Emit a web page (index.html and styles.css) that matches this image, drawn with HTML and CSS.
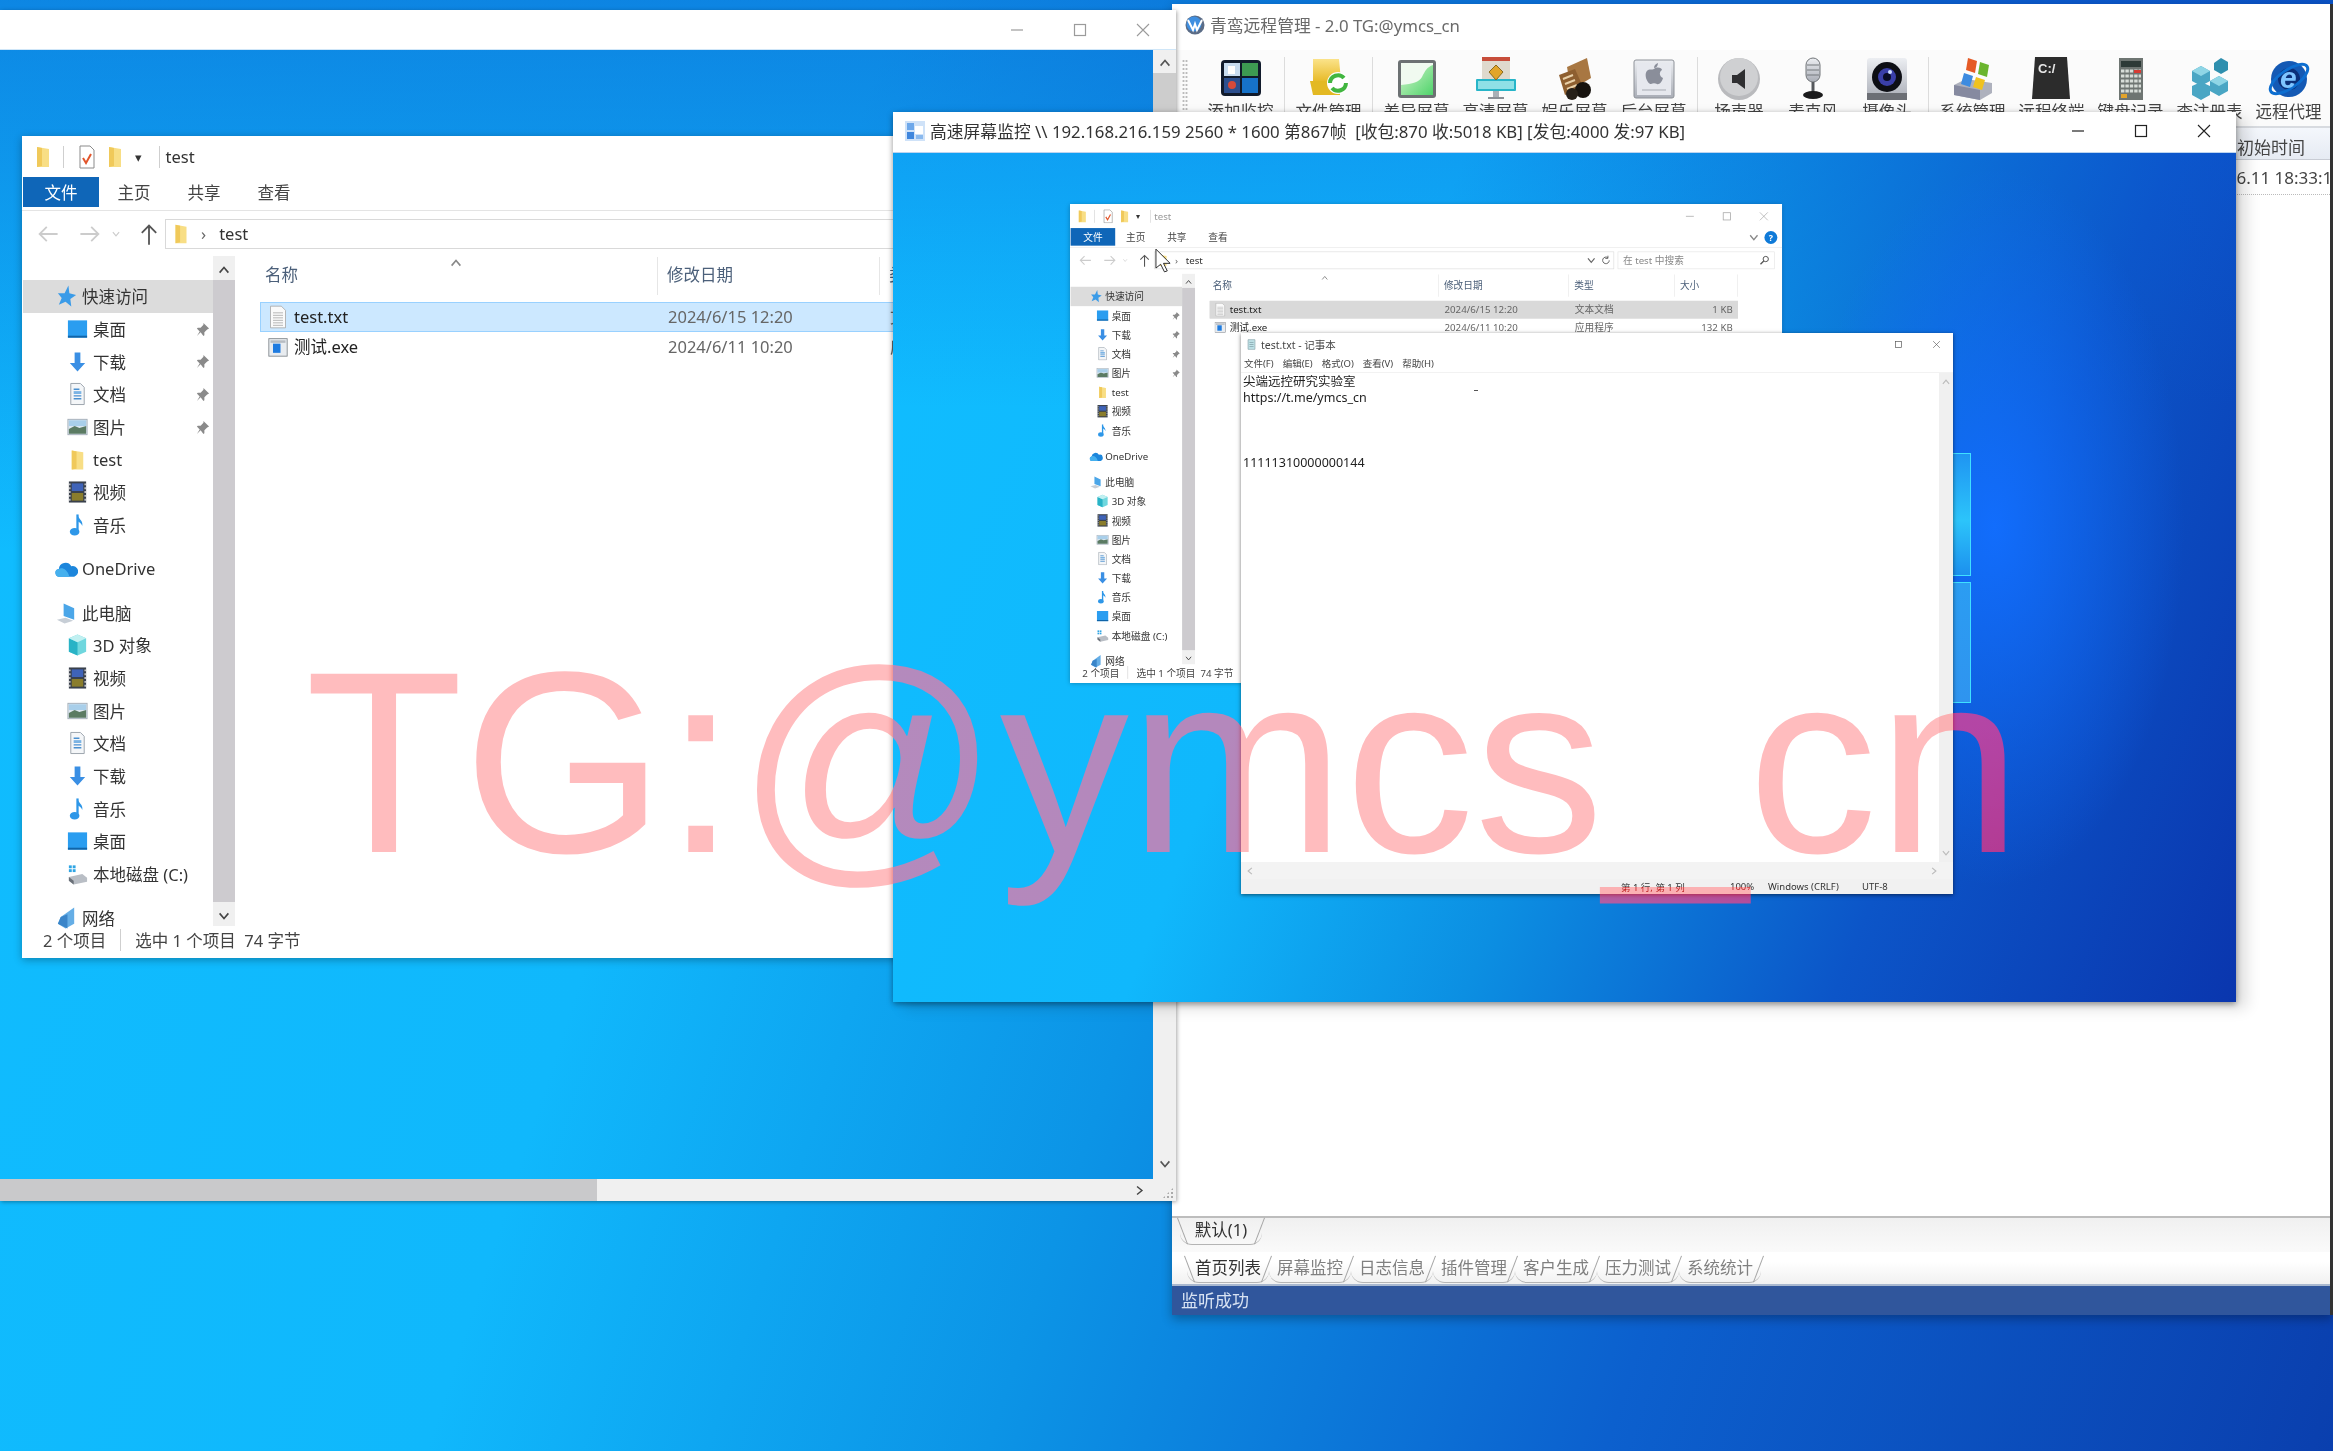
FILE: index.html
```html
<!DOCTYPE html>
<html lang="zh-CN">
<head>
  <meta charset="UTF-8">
  <title>青鸾远程管理 - 高速屏幕监控</title>
  <link rel="stylesheet" href="styles.css">
</head>
<body>
  <svg class="sprite" aria-hidden="true">
    <defs>
      <linearGradient id="g-silver" x1="0" y1="0" x2="0" y2="1"><stop offset="0" stop-color="#eceef2"/><stop offset="1" stop-color="#a9adb6"/></linearGradient>
      <linearGradient id="g-green" x1="0" y1="0" x2="1" y2="1"><stop offset="0" stop-color="#d8f5cf"/><stop offset="1" stop-color="#4fd46b"/></linearGradient>
      <linearGradient id="g-yellow" x1="0" y1="0" x2="0" y2="1"><stop offset="0" stop-color="#fbe38a"/><stop offset="1" stop-color="#e8bb2a"/></linearGradient>
    </defs>
    <symbol id="i-min" viewBox="0 0 16 16"><path d="M2 8h12" stroke="currentColor" stroke-width="1.2"/></symbol>
    <symbol id="i-max" viewBox="0 0 16 16"><rect x="2.5" y="2.5" width="11" height="11" fill="none" stroke="currentColor" stroke-width="1.2"/></symbol>
    <symbol id="i-close" viewBox="0 0 16 16"><path d="M2 2l12 12M14 2L2 14" stroke="currentColor" stroke-width="1.1"/></symbol>
    <symbol id="i-folder" viewBox="0 0 24 24"><path d="M6 2l12 2v18H6z" fill="#f8de85"/><path d="M6 2l5 1v18l-5 1z" fill="#f0c95a"/></symbol>
    <symbol id="i-check" viewBox="0 0 24 24"><path d="M5 1h10l4 4v18H5z" fill="#fff" stroke="#8b8b8b"/><path d="M8 13l3 5 5-9" fill="none" stroke="#e2552b" stroke-width="2"/></symbol>
    <symbol id="i-star" viewBox="0 0 24 24"><path d="M14 1l1 8 7 2-6 4 1 8-6-5-7 3 3-7-4-5h7z" fill="#3a9be8"/></symbol>
    <symbol id="i-desktop" viewBox="0 0 24 24"><rect x="2" y="3" width="20" height="18" fill="#2a9df0"/><rect x="2" y="19" width="20" height="2" fill="#1164a8"/></symbol>
    <symbol id="i-down" viewBox="0 0 24 24"><path d="M9 2h6v11h5l-8 9-8-9h5z" fill="#3a8fe4"/></symbol>
    <symbol id="i-doc" viewBox="0 0 24 24"><path d="M5 1h10l4 4v18H5z" fill="#f4f6f8" stroke="#9aa2ab"/><path d="M8 7h6M8 14h8M8 17h8" stroke="#4a90d0" stroke-width="1.4"/><rect x="8" y="9" width="8" height="3" fill="#7cb4e4"/></symbol>
    <symbol id="i-picture" viewBox="0 0 24 24"><rect x="2" y="4" width="20" height="16" fill="#dfe9f2" stroke="#a5afb9"/><path d="M3 14l6-3 5 2 7-2v8H3z" fill="#5b7b63"/><rect x="3" y="5" width="18" height="6" fill="#a9cfea"/></symbol>
    <symbol id="i-video" viewBox="0 0 24 24"><rect x="3" y="1" width="18" height="22" fill="#39404c"/><rect x="6" y="3" width="12" height="8" fill="#3f63b8"/><rect x="6" y="13" width="12" height="8" fill="#8a7d2c"/><path d="M4 3v18M20 3v18" stroke="#d8d8d8" stroke-width="1.4" stroke-dasharray="2 2"/></symbol>
    <symbol id="i-music" viewBox="0 0 24 24"><path d="M12 1v16" stroke="#2e97e8" stroke-width="2.4"/><ellipse cx="9" cy="19" rx="5" ry="4" fill="#2e97e8"/><path d="M12 1c1 5 6 6 5 12-1-3-3-4-5-5z" fill="#2e97e8"/></symbol>
    <symbol id="i-cloud" viewBox="0 0 24 24"><path d="M5 20a4 4 0 0 1-1-8 7 7 0 0 1 13-3 5 5 0 0 1 3 11z" fill="#1c86dc"/><path d="M5 20a4 4 0 0 1-1-8c3-2 9 0 11 8z" fill="#45b0ee"/></symbol>
    <symbol id="i-pc" viewBox="0 0 24 24"><path d="M9 2l11 5v12L9 15z" fill="#4ba6e8"/><path d="M2 19l9-2 8 3-9 3z" fill="#c7ced6"/></symbol>
    <symbol id="i-cube" viewBox="0 0 24 24"><path d="M12 1l9 4v14l-9 4-9-4V5z" fill="#6fd7de"/><path d="M12 9v14l-9-4V5z" fill="#29b3c6"/><path d="M12 1l9 4-9 4-9-4z" fill="#c1f0f1"/></symbol>
    <symbol id="i-disk" viewBox="0 0 24 24"><path d="M3 15l14-3 5 4v4l-14 3-5-4z" fill="#b9bec5"/><path d="M3 15v4l5 4v-4z" fill="#6a7078"/><rect x="3" y="3" width="3" height="3" fill="#2fa5e4"/><rect x="7" y="3" width="3" height="3" fill="#2fa5e4"/><rect x="3" y="7" width="3" height="3" fill="#2fa5e4"/><rect x="7" y="7" width="3" height="3" fill="#2fa5e4"/></symbol>
    <symbol id="i-net" viewBox="0 0 24 24"><path d="M20 1v17l-9 5-8-5 3-7z" fill="#65aee6"/><path d="M13 8v15l-10-5 3-7z" fill="#3a85c9"/></symbol>
    <symbol id="i-pin" viewBox="0 0 16 16"><path d="M9 1l6 6-2 1-3 3v3l-1 1-3-4-4 4 3-5-3-3 1-1h3l3-3z" fill="#8a8a8a"/></symbol>
    <symbol id="i-txt" viewBox="0 0 24 28"><path d="M3 1h13l5 5v21H3z" fill="#fafafa" stroke="#a8a8a8"/><path d="M6 9h12M6 12h12M6 15h12M6 18h12M6 21h12M6 24h12" stroke="#a9a9a9"/></symbol>
    <symbol id="i-exe" viewBox="0 0 24 24"><rect x="1" y="2" width="22" height="21" fill="#e8ecf0" stroke="#7c8288"/><rect x="3" y="4" width="18" height="3" fill="#b7bcc2"/><rect x="6" y="8" width="9" height="11" fill="#1e7be0"/></symbol>
    <symbol id="i-chev-up" viewBox="0 0 16 16"><path d="M3 11l5-6 5 6" fill="none" stroke="currentColor" stroke-width="1.8"/></symbol>
    <symbol id="i-chev-down" viewBox="0 0 16 16"><path d="M3 5l5 6 5-6" fill="none" stroke="currentColor" stroke-width="1.8"/></symbol>
    <symbol id="i-chev-left" viewBox="0 0 16 16"><path d="M11 3l-6 5 6 5" fill="none" stroke="currentColor" stroke-width="1.8"/></symbol>
    <symbol id="i-chev-right" viewBox="0 0 16 16"><path d="M5 3l6 5-6 5" fill="none" stroke="currentColor" stroke-width="1.8"/></symbol>
    <symbol id="i-left" viewBox="0 0 20 20"><path d="M18 10H3M9 4l-6 6 6 6" fill="none" stroke="currentColor" stroke-width="1.5"/></symbol>
    <symbol id="i-right" viewBox="0 0 20 20"><path d="M2 10h15M11 4l6 6-6 6" fill="none" stroke="currentColor" stroke-width="1.5"/></symbol>
    <symbol id="i-up" viewBox="0 0 20 20"><path d="M10 19V3M4 9l6-6 6 6" fill="none" stroke="currentColor" stroke-width="1.5"/></symbol>
    <symbol id="i-refresh" viewBox="0 0 16 16"><path d="M13 8a5 5 0 1 1-2-4" fill="none" stroke="currentColor" stroke-width="1.5"/><path d="M11 1v4H7" fill="none" stroke="currentColor" stroke-width="1.5"/></symbol>
    <symbol id="i-search" viewBox="0 0 16 16"><circle cx="10" cy="6" r="4" fill="none" stroke="currentColor" stroke-width="1.5"/><path d="M7 9l-5 5" stroke="currentColor" stroke-width="2"/></symbol>
    <symbol id="i-monitor" viewBox="0 0 20 20"><rect width="20" height="20" fill="#cfe2f8"/><rect x="2" y="2" width="7" height="7" fill="#6ea8ea"/><rect x="10" y="5" width="8" height="8" fill="#fff"/><rect x="2" y="11" width="7" height="7" fill="#3f86dd"/><rect x="11" y="14" width="7" height="4" fill="#8ab9ee"/></symbol>
    <symbol id="i-notepad" viewBox="0 0 16 16"><path d="M3 1h10v14H3z" fill="#bfe3e8" stroke="#8aa6ad"/><path d="M5 5h6M5 8h6M5 11h6" stroke="#7e9aa2"/></symbol>
  </svg>

  <main class="desktop">

    <!-- main console, right side -->
    <section class="console">
      <header class="console-title">
        <svg class="console-logo" viewBox="0 0 20 20">
          <circle cx="10" cy="10" r="9.5" fill="#5b6c86"/>
          <circle cx="9" cy="9" r="7.5" fill="#3f8fe0"/>
          <path d="M3 5l5 10 2-6 2 6 5-10" fill="none" stroke="#fff" stroke-width="2"/>
        </svg>
        <span>青鸾远程管理 - 2.0 TG:@ymcs_cn</span>
      </header>
      <div class="toolbar">
        <span class="grip"></span>
        <div class="tool">
          <svg viewBox="0 0 44 44"><rect x="2" y="3" width="40" height="36" rx="4" fill="#111b2c"/><rect x="5" y="6" width="16" height="13" fill="#c8dcf0"/><rect x="23" y="6" width="16" height="13" fill="#3d9a52"/><rect x="5" y="21" width="16" height="15" fill="#2c4f8e"/><rect x="23" y="21" width="16" height="15" fill="#1672c9"/><circle cx="13" cy="28" r="4" fill="#d64a3a"/><rect x="9" y="9" width="7" height="8" fill="#fff"/></svg>
          <span>添加监控</span>
        </div>
        <span class="tool-sep"></span>
        <div class="tool">
          <svg viewBox="0 0 44 44"><path d="M6 2h26l2 22H6z" fill="url(#g-yellow)"/><path d="M3 24h30v14H6z" fill="#e3b923"/><circle cx="31" cy="26" r="11" fill="#fff"/><path d="M23 26a8 8 0 0 1 14-5M39 26a8 8 0 0 1-14 5" fill="none" stroke="#42b640" stroke-width="4"/></svg>
          <span>文件管理</span>
        </div>
        <span class="tool-sep"></span>
        <div class="tool">
          <svg viewBox="0 0 44 44"><rect x="3" y="3" width="38" height="38" rx="3" fill="#6c7173"/><rect x="6" y="6" width="32" height="32" fill="url(#g-green)"/><path d="M6 6h32v2c-6 2-8 6-11 12-3 5-9 7-21 8z" fill="#f0faf0"/></svg>
          <span>差异屏幕</span>
        </div>
        <div class="tool">
          <svg viewBox="0 0 44 44"><rect x="8" y="0" width="28" height="6" fill="#c74d3a"/><rect x="8" y="4" width="28" height="26" fill="#dfd9cd"/><rect x="2" y="22" width="40" height="12" rx="1" fill="#27b5c8"/><rect x="4" y="24" width="36" height="8" fill="#8fe0e6"/><path d="M22 8l7 7-7 8-7-8z" fill="#e2a52a" stroke="#8a6a1e"/><rect x="19" y="34" width="6" height="6" fill="#aab0b6"/><rect x="14" y="40" width="16" height="2" fill="#8b9096"/></svg>
          <span>高清屏幕</span>
        </div>
        <div class="tool">
          <svg viewBox="0 0 44 44"><path d="M14 10l20-9 4 20-20 12z" fill="#a87742"/><path d="M6 18l16-6 8 18-18 8z" fill="#8e5f30"/><path d="M10 22l10-4M12 27l10-4M14 32l10-4" stroke="#e8d0a8" stroke-width="2"/><circle cx="30" cy="33" r="8" fill="#17130f"/><circle cx="19" cy="37" r="6" fill="#262019"/></svg>
          <span>娱乐屏幕</span>
        </div>
        <div class="tool">
          <svg viewBox="0 0 44 44"><rect x="2" y="3" width="40" height="38" rx="2" fill="url(#g-silver)" stroke="#8e9299"/><rect x="5" y="6" width="34" height="32" fill="#e6e8ee"/><path d="M22 12c3-3 8-1 8 1-3 2-3 6 1 8-1 4-4 7-6 6-2-1-4-1-6 0-4 0-8-11-3-14 2-1 4 0 6-1z" fill="#8a8e9a"/><path d="M22 11c0-3 2-4 4-5 0 3-2 5-4 5z" fill="#8a8e9a"/><path d="M10 33h24" stroke="#a7abb3"/></svg>
          <span>后台屏幕</span>
        </div>
        <span class="tool-sep"></span>
        <div class="tool tool-short">
          <svg viewBox="0 0 44 44"><circle cx="22" cy="22" r="21" fill="#b9babd"/><circle cx="22" cy="20" r="19" fill="#cfd0d2"/><path d="M15 18h5l8-6v20l-8-6h-5z" fill="#2f2f31"/></svg>
          <span>扬声器</span>
        </div>
        <div class="tool tool-short">
          <svg viewBox="0 0 44 44"><rect x="15" y="1" width="14" height="24" rx="7" fill="url(#g-silver)" stroke="#707478"/><path d="M16 8h12M16 13h12M16 18h12" stroke="#74787c"/><path d="M22 25v11" stroke="#55585c" stroke-width="3"/><ellipse cx="22" cy="38" rx="10" ry="4" fill="#1b1b1c"/></svg>
          <span>麦克风</span>
        </div>
        <div class="tool tool-short">
          <svg viewBox="0 0 44 44"><rect x="2" y="1" width="40" height="42" rx="3" fill="url(#g-silver)"/><rect x="2" y="36" width="40" height="7" fill="#6c6f75"/><circle cx="22" cy="20" r="15" fill="#0d0e14"/><circle cx="22" cy="20" r="9" fill="#3a3fa8"/><circle cx="22" cy="20" r="4" fill="#0b0d26"/><circle cx="25" cy="15" r="2" fill="#cfe0ff"/></svg>
          <span>摄像头</span>
        </div>
        <span class="tool-sep"></span>
        <div class="tool">
          <svg viewBox="0 0 44 44"><path d="M3 28l12-6 26 4v10l-12 7-26-5z" fill="#aeb1bd"/><path d="M3 28l26 5v10L3 38z" fill="#868aa0"/><path d="M17 1l9 3-2 12-9-3z" fill="#e55a26"/><path d="M29 5l9 3-2 12-9-3z" fill="#6bb52e"/><path d="M13 16l9 3-3 11-9-3z" fill="#3d8be0"/><path d="M25 20l9 3-3 10-9-3z" fill="#f0c21f"/></svg>
          <span>系统管理</span>
        </div>
        <div class="tool">
          <svg viewBox="0 0 44 44"><path d="M5 0h32l3 42H2z" fill="#2c2c2c"/><text x="8" y="16" class="key-text">C:/</text></svg>
          <span>远程终端</span>
        </div>
        <div class="tool">
          <svg viewBox="0 0 44 44"><rect x="10" y="1" width="24" height="42" fill="#6e7572"/><rect x="12" y="4" width="20" height="6" fill="#2d3a37"/><path d="M12 14h20M12 19h20M12 24h20M12 29h20M12 34h20" stroke="#d7ddd8" stroke-width="3" stroke-dasharray="3.4 1"/><rect x="25" y="13" width="7" height="3" fill="#d63b34"/><rect x="12" y="37" width="6" height="4" fill="#e2a32a"/></svg>
          <span>键盘记录</span>
        </div>
        <div class="tool">
          <svg viewBox="0 0 44 44"><path d="M4 14l9-5 9 5v10l-9 5-9-5zM4 29l9-4 9 4v9l-9 5-9-5zM22 24l9-5 9 5v10l-9 5-9-5z" fill="#4aa6c4"/><path d="M4 14l9-5 9 5-9 5zM22 24l9-5 9 5-9 5z" fill="#8fd6e6"/><path d="M26 6l7-5 7 4v8l-7 4-7-4z" fill="#2f8fae"/></svg>
          <span>查注册表</span>
        </div>
        <div class="tool">
          <svg viewBox="0 0 44 44"><circle cx="22" cy="22" r="18" fill="#1459b4"/><circle cx="22" cy="22" r="11" fill="#0b2f78"/><ellipse cx="22" cy="22" rx="22" ry="9" fill="none" stroke="#0d6ed0" stroke-width="3" transform="rotate(-35 22 22)"/><text x="13" y="31" class="ie-text">e</text></svg>
          <span>远程代理</span>
        </div>
      </div>
      <div class="list-head"><span>初始时间</span></div>
      <div class="list-rows">
        <div class="list-row"><span>2024.6.11 18:33:12</span></div>
      </div>
      <div class="group-tabs">
        <div class="tab tab-on">默认(1)</div>
      </div>
      <nav class="page-tabs">
        <div class="tab tab-on">首页列表</div>
        <div class="tab">屏幕监控</div>
        <div class="tab">日志信息</div>
        <div class="tab">插件管理</div>
        <div class="tab">客户生成</div>
        <div class="tab">压力测试</div>
        <div class="tab">系统统计</div>
      </nav>
      <footer class="console-status">监听成功</footer>
    </section>

    <!-- empty child window behind the explorer -->
    <section class="back-win">
      <header class="win-title back-title">
        <span class="win-btns back-btns">
          <svg><use href="#i-min"/></svg><svg><use href="#i-max"/></svg><svg><use href="#i-close"/></svg>
        </span>
      </header>
      <div class="back-body">
        <div class="back-client"></div>
        <div class="vscroll">
          <svg><use href="#i-chev-up"/></svg>
          <span class="vscroll-thumb"></span>
          <svg><use href="#i-chev-down"/></svg>
        </div>
      </div>
      <div class="hscroll">
        <span class="hscroll-thumb"></span>
        <svg><use href="#i-chev-right"/></svg>
        <i class="size-grip"></i>
      </div>
    </section>

    <!-- local explorer -->
    <section class="explorer explorer-local">
      <header class="ex-title">
        <svg class="ex-qa"><use href="#i-folder"/></svg>
        <i class="ex-bar"></i>
        <svg class="ex-qa"><use href="#i-check"/></svg>
        <svg class="ex-qa"><use href="#i-folder"/></svg>
        <span class="ex-caret">▾</span>
        <i class="ex-bar"></i>
        <span class="ex-name">test</span>
        <span class="win-btns ex-btns">
          <svg><use href="#i-min"/></svg><svg><use href="#i-max"/></svg><svg><use href="#i-close"/></svg>
        </span>
      </header>
      <div class="ribbon">
        <span class="rb-file">文件</span><span>主页</span><span>共享</span><span>查看</span>
        <svg class="rb-fold"><use href="#i-chev-down"/></svg>
        <b class="rb-help">?</b>
      </div>
      <div class="addr-row">
        <svg class="nav-arrow off"><use href="#i-left"/></svg>
        <svg class="nav-arrow off"><use href="#i-right"/></svg>
        <svg class="nav-drop"><use href="#i-chev-down"/></svg>
        <svg class="nav-arrow nav-parent"><use href="#i-up"/></svg>
        <div class="addr-box">
          <svg><use href="#i-folder"/></svg><span class="addr-sep">›</span><span>test</span>
          <svg class="addr-tool addr-drop"><use href="#i-chev-down"/></svg>
          <svg class="addr-tool"><use href="#i-refresh"/></svg>
        </div>
        <div class="search-box"><span>在 test 中搜索</span><svg><use href="#i-search"/></svg></div>
      </div>
      <div class="ex-body">
        <ul class="nav-pane">
          <li class="nav-item nav-top nav-on"><svg><use href="#i-star"/></svg>快速访问</li>
          <li class="nav-item"><svg><use href="#i-desktop"/></svg>桌面<svg class="pin"><use href="#i-pin"/></svg></li>
          <li class="nav-item"><svg><use href="#i-down"/></svg>下载<svg class="pin"><use href="#i-pin"/></svg></li>
          <li class="nav-item"><svg><use href="#i-doc"/></svg>文档<svg class="pin"><use href="#i-pin"/></svg></li>
          <li class="nav-item"><svg><use href="#i-picture"/></svg>图片<svg class="pin"><use href="#i-pin"/></svg></li>
          <li class="nav-item"><svg><use href="#i-folder"/></svg>test</li>
          <li class="nav-item"><svg><use href="#i-video"/></svg>视频</li>
          <li class="nav-item"><svg><use href="#i-music"/></svg>音乐</li>
          <li class="nav-item nav-top nav-gap"><svg><use href="#i-cloud"/></svg>OneDrive</li>
          <li class="nav-item nav-top nav-gap"><svg><use href="#i-pc"/></svg>此电脑</li>
          <li class="nav-item"><svg><use href="#i-cube"/></svg>3D 对象</li>
          <li class="nav-item"><svg><use href="#i-video"/></svg>视频</li>
          <li class="nav-item"><svg><use href="#i-picture"/></svg>图片</li>
          <li class="nav-item"><svg><use href="#i-doc"/></svg>文档</li>
          <li class="nav-item"><svg><use href="#i-down"/></svg>下载</li>
          <li class="nav-item"><svg><use href="#i-music"/></svg>音乐</li>
          <li class="nav-item"><svg><use href="#i-desktop"/></svg>桌面</li>
          <li class="nav-item"><svg><use href="#i-disk"/></svg>本地磁盘 (C:)</li>
          <li class="nav-item nav-top nav-gap"><svg><use href="#i-net"/></svg>网络</li>
        </ul>
        <div class="nav-scroll">
          <svg><use href="#i-chev-up"/></svg>
          <span class="nav-thumb"></span>
          <svg><use href="#i-chev-down"/></svg>
        </div>
        <div class="files">
          <div class="file-head">
            <span>名称<svg class="sort-mark"><use href="#i-chev-up"/></svg></span><span>修改日期</span><span>类型</span><span>大小</span>
          </div>
          <div class="file-row file-sel">
            <span class="file-name"><svg class="file-icon"><use href="#i-txt"/></svg>test.txt</span><span>2024/6/15 12:20</span><span>文本文档</span><span class="file-size">1 KB</span>
          </div>
          <div class="file-row">
            <span class="file-name"><svg class="file-icon"><use href="#i-exe"/></svg>测试.exe</span><span>2024/6/11 10:20</span><span>应用程序</span><span class="file-size">132 KB</span>
          </div>
        </div>
      </div>
      <footer class="ex-status"><span>2 个项目</span><i class="ex-bar"></i><span>选中 1 个项目&nbsp; 74 字节</span></footer>
    </section>

    <!-- screen monitor window -->
    <section class="monitor">
      <header class="win-title monitor-title">
        <svg class="monitor-icon"><use href="#i-monitor"/></svg>
        <span>高速屏幕监控 \\ 192.168.216.159 2560 * 1600 第867帧 &nbsp;[收包:870 收:5018 KB] [发包:4000 发:97 KB]</span>
        <span class="win-btns monitor-btns">
          <svg><use href="#i-min"/></svg><svg><use href="#i-max"/></svg><svg><use href="#i-close"/></svg>
        </span>
      </header>
      <div class="remote">
        <span class="logo-pane logo-top"></span>
        <span class="logo-pane logo-bottom"></span>

        <section class="explorer explorer-remote">
          <header class="ex-title">
            <svg class="ex-qa"><use href="#i-folder"/></svg>
            <i class="ex-bar"></i>
            <svg class="ex-qa"><use href="#i-check"/></svg>
            <svg class="ex-qa"><use href="#i-folder"/></svg>
            <span class="ex-caret">▾</span>
            <i class="ex-bar"></i>
            <span class="ex-name">test</span>
            <span class="win-btns ex-btns">
              <svg><use href="#i-min"/></svg><svg><use href="#i-max"/></svg><svg><use href="#i-close"/></svg>
            </span>
          </header>
          <div class="ribbon">
            <span class="rb-file">文件</span><span>主页</span><span>共享</span><span>查看</span>
            <svg class="rb-fold"><use href="#i-chev-down"/></svg>
            <b class="rb-help">?</b>
          </div>
          <div class="addr-row">
            <svg class="nav-arrow off"><use href="#i-left"/></svg>
            <svg class="nav-arrow off"><use href="#i-right"/></svg>
            <svg class="nav-drop"><use href="#i-chev-down"/></svg>
            <svg class="nav-arrow nav-parent"><use href="#i-up"/></svg>
            <div class="addr-box">
              <svg><use href="#i-folder"/></svg><span class="addr-sep">›</span><span>test</span>
              <svg class="addr-tool addr-drop"><use href="#i-chev-down"/></svg>
              <svg class="addr-tool"><use href="#i-refresh"/></svg>
            </div>
            <div class="search-box"><span>在 test 中搜索</span><svg><use href="#i-search"/></svg></div>
          </div>
          <div class="ex-body">
            <ul class="nav-pane">
              <li class="nav-item nav-top nav-on"><svg><use href="#i-star"/></svg>快速访问</li>
              <li class="nav-item"><svg><use href="#i-desktop"/></svg>桌面<svg class="pin"><use href="#i-pin"/></svg></li>
              <li class="nav-item"><svg><use href="#i-down"/></svg>下载<svg class="pin"><use href="#i-pin"/></svg></li>
              <li class="nav-item"><svg><use href="#i-doc"/></svg>文档<svg class="pin"><use href="#i-pin"/></svg></li>
              <li class="nav-item"><svg><use href="#i-picture"/></svg>图片<svg class="pin"><use href="#i-pin"/></svg></li>
              <li class="nav-item"><svg><use href="#i-folder"/></svg>test</li>
              <li class="nav-item"><svg><use href="#i-video"/></svg>视频</li>
              <li class="nav-item"><svg><use href="#i-music"/></svg>音乐</li>
              <li class="nav-item nav-top nav-gap"><svg><use href="#i-cloud"/></svg>OneDrive</li>
              <li class="nav-item nav-top nav-gap"><svg><use href="#i-pc"/></svg>此电脑</li>
              <li class="nav-item"><svg><use href="#i-cube"/></svg>3D 对象</li>
              <li class="nav-item"><svg><use href="#i-video"/></svg>视频</li>
              <li class="nav-item"><svg><use href="#i-picture"/></svg>图片</li>
              <li class="nav-item"><svg><use href="#i-doc"/></svg>文档</li>
              <li class="nav-item"><svg><use href="#i-down"/></svg>下载</li>
              <li class="nav-item"><svg><use href="#i-music"/></svg>音乐</li>
              <li class="nav-item"><svg><use href="#i-desktop"/></svg>桌面</li>
              <li class="nav-item"><svg><use href="#i-disk"/></svg>本地磁盘 (C:)</li>
              <li class="nav-item nav-top nav-gap"><svg><use href="#i-net"/></svg>网络</li>
            </ul>
            <div class="nav-scroll">
              <svg><use href="#i-chev-up"/></svg>
              <span class="nav-thumb"></span>
              <svg><use href="#i-chev-down"/></svg>
            </div>
            <div class="files">
              <div class="file-head">
                <span>名称<svg class="sort-mark"><use href="#i-chev-up"/></svg></span><span>修改日期</span><span>类型</span><span>大小</span>
              </div>
              <div class="file-row file-sel">
                <span class="file-name"><svg class="file-icon"><use href="#i-txt"/></svg>test.txt</span><span>2024/6/15 12:20</span><span>文本文档</span><span class="file-size">1 KB</span>
              </div>
              <div class="file-row">
                <span class="file-name"><svg class="file-icon"><use href="#i-exe"/></svg>测试.exe</span><span>2024/6/11 10:20</span><span>应用程序</span><span class="file-size">132 KB</span>
              </div>
            </div>
          </div>
          <footer class="ex-status"><span>2 个项目</span><i class="ex-bar"></i><span>选中 1 个项目&nbsp; 74 字节</span></footer>
        </section>

        <section class="notepad">
          <header class="np-title">
            <svg><use href="#i-notepad"/></svg>
            <span>test.txt - 记事本</span>
            <span class="win-btns np-btns">
              <svg><use href="#i-max"/></svg><svg><use href="#i-close"/></svg>
            </span>
          </header>
          <div class="np-menu"><span>文件(F)</span><span>编辑(E)</span><span>格式(O)</span><span>查看(V)</span><span>帮助(H)</span></div>
          <div class="np-main">
            <pre class="np-text">尖端远控研究实验室
https://t.me/ymcs_cn



11111310000000144</pre>
            <div class="np-vscroll">
              <svg><use href="#i-chev-up"/></svg>
              <svg><use href="#i-chev-down"/></svg>
            </div>
            <i class="np-speck"></i>
          </div>
          <div class="np-hscroll">
            <svg><use href="#i-chev-left"/></svg>
            <svg><use href="#i-chev-right"/></svg>
          </div>
          <footer class="np-status"><span class="np-pos">第 1 行, 第 1 列</span><span class="np-zoom">100%</span><span class="np-eol">Windows (CRLF)</span><span>UTF-8</span></footer>
        </section>

        <svg class="cursor" viewBox="0 0 18 26"><path d="M1 1v20l5-4 4 8 3-1-4-8h7z" fill="#fff" stroke="#222"/></svg>
      </div>
    </section>

    <!-- two layers: one darkens green and blue, the other lifts red -->
    <div class="watermark wm-multiply">TG:@ymcs_cn</div>
    <div class="watermark wm-screen" data-text="TG:@ymcs_cn" aria-hidden="true"></div>
  </main>
</body>
</html>
```

FILE: styles.css
```css
* { box-sizing: border-box; }
html, body { margin: 0; height: 100%; overflow: hidden; }
body {
  font-family: "Noto Sans", "Noto Sans CJK SC", sans-serif;
  font-size: 17px;
  color: #222;
}
.sprite { position: absolute; width: 0; height: 0; }
ul { list-style: none; margin: 0; padding: 0; }

.desktop {
  position: relative;
  width: 2333px;
  height: 1451px;
  overflow: hidden;
  isolation: isolate;
  background:
    linear-gradient(to bottom, rgba(10,80,200,.5), rgba(10,80,200,0) 38%),
    linear-gradient(108deg, #10bdff 0%, #10b8fc 32%, #0c94e6 52%, #0c60ce 74%, #0a3fae 100%);
}

/* window buttons */
.win-btns { display: flex; margin-left: auto; }
.win-btns svg { display: block; }

/* main console */
.console {
  position: absolute;
  left: 1172px;
  top: 4px;
  width: 1161px;
  height: 1311px;
  display: flex;
  flex-direction: column;
  background: #fff;
  border-right: 3px solid #333;
  box-shadow: 0 4px 10px rgba(0,0,0,.3);
}
.console-title {
  height: 46px;
  display: flex;
  align-items: center;
  padding: 0 0 5px 13px;
  gap: 5px;
  color: #6a6a6a;
  font-size: 16.8px;
  flex: none;
}
.console-logo { width: 20px; height: 20px; }
.toolbar {
  flex: none;
  height: 78px;
  display: flex;
  padding-top: 7px;
  border-bottom: 2px solid #d8dbe0;
  background: #fbfbfb;
}
.grip {
  width: 6px;
  height: 58px;
  margin: 2px 13px 0 10px;
  background: radial-gradient(circle, #bbb 1px, transparent 1.2px) 0 0 / 3px 4px;
}
.tool {
  width: 79px;
  flex: none;
  display: flex;
  flex-direction: column;
  align-items: center;
  color: #444;
  font-size: 16.5px;
  line-height: 22px;
  white-space: nowrap;
}
.tool-short { width: 74px; }
.tool svg { width: 44px; height: 44px; }
.tool-sep { width: 1px; height: 60px; margin: 0 4px; background: #dcdcdc; flex: none; }
.key-text { font: bold 13px "Liberation Sans", sans-serif; fill: #e8e8e8; }
.ie-text { font: italic bold 30px "Liberation Sans", sans-serif; fill: #7ec4ff; }

.list-head {
  flex: none;
  height: 32px;
  padding: 5px 0 0 1065px;
  display: flex;
  align-items: center;
  background: linear-gradient(#f4f7fc, #e6ebf3);
  border-bottom: 1px solid #c8ccd4;
  white-space: nowrap;
  color: #444;
}
.list-rows { flex: 1; overflow: hidden; }
.list-row {
  height: 35px;
  padding-left: 1021px;
  border-bottom: 1px dotted #bbb;
  display: flex;
  align-items: center;
  white-space: nowrap;
  color: #444;
}
.group-tabs {
  flex: none;
  height: 36px;
  padding-left: 8px;
  border-top: 2px solid #bdbdbd;
  background: linear-gradient(#f0f0f0, #fafafa);
}
.page-tabs {
  flex: none;
  height: 34px;
  padding: 4px 0 0 15px;
  display: flex;
  background: linear-gradient(#fff 0, #fff 30%, #f1f1f1);
  border-bottom: 2px solid #a9b8cf;
}
.tab {
  position: relative;
  height: 27px;
  width: 82px;
  line-height: 24px;
  text-align: center;
  font-size: 16.5px;
  white-space: nowrap;
  color: #808080;
  border-bottom: 1px solid #b4b4b4;
  border-radius: 0 0 12px 12px;
}
.tab::after {
  content: "";
  position: absolute;
  right: 2px;
  top: -1px;
  width: 1px;
  height: 28px;
  background: #a6a6a6;
  transform: rotate(21deg);
}
.tab-on { color: #333; }
.tab-on::before {
  content: "";
  position: absolute;
  left: 2px;
  top: -1px;
  width: 1px;
  height: 28px;
  background: #a6a6a6;
  transform: rotate(-21deg);
}
.console-status {
  flex: none;
  height: 29px;
  line-height: 29px;
  padding-left: 9px;
  background: #30569c;
  color: #d8e3f3;
}

/* blank window behind the explorer */
.win-title { background: #fff; display: flex; align-items: center; flex: none; }
.back-win {
  position: absolute;
  left: 0;
  top: 10px;
  width: 1176px;
  height: 1191px;
  display: flex;
  flex-direction: column;
  box-shadow: 1px 1px 4px rgba(0,0,0,.35);
}
.back-title { height: 40px; color: #9b9b9b; border-bottom: 1px solid #cfe6f8; }
.back-btns { margin-right: 25px; gap: 47px; }
.back-btns svg { width: 16px; height: 16px; }
.back-body { flex: 1; display: flex; min-height: 0; }
.back-client { flex: 1; }
.vscroll {
  width: 23px;
  display: flex;
  flex-direction: column;
  align-items: center;
  background: #f0f0f0;
  color: #555;
  padding: 6px 0 8px;
}
.vscroll svg { width: 14px; height: 14px; flex: none; }
.vscroll-thumb { flex: none; width: 100%; height: 200px; margin-top: 3px; margin-bottom: auto; background: #cdcdcd; }
.hscroll {
  flex: none;
  height: 22px;
  position: relative;
  display: flex;
  align-items: center;
  background: #f0f0f0;
  color: #444;
}
.hscroll-thumb { width: 597px; height: 100%; background: #c9c9cb; }
.hscroll svg { width: 13px; height: 13px; margin: 0 0 0 536px; }
.size-grip {
  position: absolute;
  right: 2px;
  bottom: 2px;
  width: 12px;
  height: 12px;
  background: radial-gradient(circle, #aaa 1px, transparent 1.3px) 0 0 / 4px 4px;
  clip-path: polygon(100% 0, 100% 100%, 0 100%);
}

/* explorer, drawn once at full size and once scaled down in the remote view */
.explorer {
  width: 1213px;
  height: 822px;
  background: #fff;
  display: flex;
  flex-direction: column;
  font-size: 16.5px;
  box-shadow: 0 2px 8px rgba(0,0,0,.3);
}
.explorer-local { position: absolute; left: 22px; top: 136px; }
.explorer-remote {
  position: absolute;
  left: 177px;
  top: 51px;
  height: 816px;
  transform: scale(.587);
  transform-origin: 0 0;
  filter: blur(.4px);
}
.ex-title { flex: none; height: 41px; display: flex; align-items: center; padding-left: 12.5px; }
.ex-qa { width: 24px; height: 24px; margin: 0 8px 0 -4px; flex: none; }
.ex-bar { width: 1px; height: 22px; background: #cfcfcf; margin: 0 15px 0 0; flex: none; }
.ex-caret { font-size: 13px; width: 9px; margin-right: 15px; color: #333; }
.ex-name { margin-left: -9px; color: #333; }
.explorer-remote .ex-name { color: #999; }
.ex-btns { color: #aaa; gap: 45px; padding-right: 22px; }
.ex-btns svg { width: 18px; height: 18px; }
.ribbon {
  flex: none;
  height: 34px;
  display: flex;
  align-items: stretch;
  border-bottom: 1px solid #e4e4e4;
  color: #444;
  line-height: 31px;
  padding-bottom: 3px;
}
.ribbon span { width: 70px; text-align: center; }
.ribbon .rb-file { width: 76px; background: #0f66b8; color: #fff; margin-left: 1px; }
.rb-fold { width: 20px; height: 20px; margin: 6px 8px 0 auto; color: #888; }
.rb-help {
  width: 22px;
  height: 22px;
  margin: 5px 8px 0 0;
  border-radius: 50%;
  background: #0f7ad8;
  color: #fff;
  font-size: 15px;
  line-height: 22px;
  text-align: center;
}
.addr-row { flex: none; height: 45px; display: flex; align-items: center; padding: 0 12px 0 14px; }
.explorer-remote .addr-row { height: 41px; margin-bottom: 3px; }
.nav-arrow { width: 24px; height: 24px; color: #555; margin-right: 18px; flex: none; }
.nav-arrow.off { color: #ccc; }
.nav-drop { width: 10px; height: 10px; color: #ccc; margin: 0 12px 0 -9px; flex: none; }
.nav-parent { margin: 0 4px 0 4px; }
.addr-box {
  flex: 1;
  height: 30px;
  display: flex;
  align-items: center;
  gap: 7px;
  border: 1px solid #d9d9d9;
  padding: 0 4px;
  color: #333;
}
.addr-box svg { width: 22px; height: 24px; }
.addr-box .addr-tool { width: 18px; height: 18px; color: #666; }
.addr-box .addr-drop { margin-left: auto; }
.addr-sep { color: #666; margin: 0 6px 0 2px; }
.search-box {
  width: 268px;
  height: 30px;
  margin-left: 6px;
  border: 1px solid #e2e2e2;
  display: flex;
  align-items: center;
  justify-content: space-between;
  padding: 0 8px;
  color: #888;
  flex: none;
}
.search-box svg { width: 18px; height: 18px; color: #555; }
.ex-body { flex: 1; display: flex; min-height: 0; }
.nav-pane { width: 190px; margin-left: 1px; padding-top: 24px; flex: none; color: #333; white-space: nowrap; }
.explorer-remote .nav-pane { padding-top: 22px; }
.nav-item { height: 32.7px; display: flex; align-items: center; padding-left: 43px; gap: 4px; }
.nav-item > svg:first-child { width: 23px; height: 24px; flex: none; }
.nav-top { padding-left: 32px; }
.nav-gap { margin-top: 11px; }
.nav-on { background: #dcdcdc; }
.pin { width: 15px; height: 15px; margin-left: auto; margin-right: 3px; }
.nav-scroll {
  width: 22px;
  flex: none;
  display: flex;
  flex-direction: column;
  background: #f0f0f0;
  color: #444;
}
.nav-scroll svg { width: 14px; height: 14px; margin: 7px 4px 3px; flex: none; }
.nav-thumb { flex: 1; background: #cdcbcf; }
.files { flex: 1; min-width: 0; padding: 1px 75px 0 25px; }
.file-head, .file-row {
  display: grid;
  grid-template-columns: 398px 222px 180px 1fr;
}
.explorer-remote .file-head, .explorer-remote .file-row { grid-template-columns: 390px 222px 180px 1fr; }
.file-head { height: 45px; color: #4c607a; }
.file-head span {
  position: relative;
  padding: 4px 9px 0;
  height: 38px;
  line-height: 28px;
  border-right: 1px solid #e6e6e6;
}
.file-head span:first-child { padding-left: 5px; }
.sort-mark { position: absolute; left: 189px; top: -1px; width: 14px; height: 14px; color: #888; }
.file-row { height: 30px; line-height: 28px; color: #666; border: 1px solid transparent; }
.file-row span { padding-left: 9px; white-space: nowrap; }
.file-row .file-name { display: flex; align-items: center; gap: 6px; color: #222; padding-left: 7px; }
.file-row .file-size { text-align: right; padding-right: 8px; }
.file-icon { width: 20px; height: 24px; }
.file-sel { background: #cce8ff; border-color: #99d1ff; }
.explorer-remote .file-sel { background: #d9d9d9; border-color: #d9d9d9; }
.ex-status {
  flex: none;
  height: 32px;
  display: flex;
  align-items: center;
  padding: 0 0 5px 21px;
  color: #444;
}
.ex-status .ex-bar { margin: 0 14px; }

/* screen monitor */
.monitor {
  position: absolute;
  left: 893px;
  top: 112px;
  width: 1343px;
  height: 890px;
  display: flex;
  flex-direction: column;
  box-shadow: 0 2px 6px rgba(0,0,0,.4), 10px 6px 14px rgba(0,0,0,.14);
}
.monitor-title {
  height: 41px;
  padding: 0 0 2px 12px;
  gap: 5px;
  color: #333;
  white-space: nowrap;
  font-size: 16.8px;
  border-bottom: 1px solid #bcd4f0;
}
.monitor-icon { width: 20px; height: 20px; }
.monitor-btns { color: #222; margin-right: 24px; gap: 47px; }
.monitor-btns svg { width: 16px; height: 16px; }
.remote {
  position: relative;
  flex: 1;
  overflow: hidden;
  background:
    radial-gradient(ellipse 190px 360px at 82% 44%, rgba(18,110,255,.95), rgba(18,100,240,0) 100%),
    linear-gradient(to bottom, rgba(12,90,215,.28), rgba(12,90,215,0) 30%),
    linear-gradient(112deg, #10bdff 0%, #10b8fc 34%, #0c8fe2 54%, #0c55c8 76%, #0a36ae 100%);
}
.logo-pane { position: absolute; left: 1060px; width: 18px; border: 1px solid #3fe0ff; border-left: 0; }
.logo-top { top: 300px; height: 123px; background: linear-gradient(#1f95f2, #2cc4fa 55%, #1c90ee); }
.logo-bottom { top: 429px; height: 121px; background: linear-gradient(#2b9df2, #2f94ef); }

/* notepad in the remote view */
.notepad {
  position: absolute;
  left: 348px;
  top: 180px;
  width: 712px;
  height: 561px;
  display: flex;
  flex-direction: column;
  background: #fff;
  font-size: 10px;
  color: #333;
  box-shadow: 0 1px 4px rgba(0,0,0,.55);
}
.np-title { flex: none; height: 23px; display: flex; align-items: center; padding-left: 5px; gap: 4px; color: #444; font-size: 10.5px; }
.np-title svg { width: 11px; height: 13px; }
.np-btns { color: #555; gap: 29px; margin-right: 12px; }
.np-btns svg { width: 9px; height: 9px; }
.np-menu { flex: none; height: 16px; display: flex; gap: 9px; padding: 1px 0 0 3px; line-height: 13px; font-size: 9.5px; color: #444; }
.np-main { flex: 1; display: flex; min-height: 0; position: relative; border-top: 1px solid #f2f2f2; }
.np-text {
  flex: 1;
  margin: 0;
  padding: 1px 0 0 2px;
  font: 12.5px/16.25px "Noto Sans", "Noto Sans CJK SC", sans-serif;
  color: #222;
}
.np-vscroll {
  width: 14px;
  flex: none;
  background: #f0f0f0;
  color: #bbb;
  display: flex;
  flex-direction: column;
  justify-content: space-between;
  padding: 4px 2px;
}
.np-vscroll svg { width: 10px; height: 10px; }
.np-speck { position: absolute; left: 233px; top: 17px; width: 4px; height: 1px; background: #555; }
.np-hscroll {
  flex: none;
  height: 17px;
  background: #f3f3f3;
  display: flex;
  justify-content: space-between;
  align-items: center;
  padding: 0 14px 0 4px;
  color: #bbb;
}
.np-hscroll svg { width: 10px; height: 10px; }
.np-status {
  flex: none;
  height: 15px;
  background: #f1f1f1;
  display: flex;
  align-items: center;
  white-space: nowrap;
  font-size: 9.5px;
  color: #333;
  padding-left: 380px;
}
.np-pos { width: 109px; }
.np-zoom { width: 38px; }
.np-eol { width: 94px; }

.cursor { position: absolute; left: 262px; top: 95px; width: 17px; height: 25px; }

/* watermark across everything */
.watermark {
  position: absolute;
  left: 305px;
  top: 633px;
  font: 259px/1 "Liberation Sans", Arial, sans-serif;
  white-space: nowrap;
  pointer-events: none;
}
.wm-multiply { color: rgb(255,188,190); mix-blend-mode: multiply; }
.wm-screen { color: rgb(175,0,0); mix-blend-mode: screen; }
.wm-screen::before { content: attr(data-text); }
```
